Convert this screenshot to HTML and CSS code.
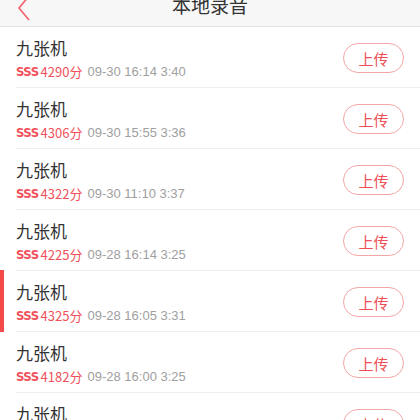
FILE: index.html
```html
<!DOCTYPE html>
<html>
<head>
  <title>本地录音</title>
  <link rel="stylesheet" href="styles.css">
</head>
<body>
  <div class="header">
    <svg class="back" width="14" height="22" viewBox="0 0 14 22">
      <polyline points="12,-4 2,8 12,20" fill="none" stroke="#f0606a" stroke-width="1.6"/>
    </svg>
    <div class="title">本地录音</div>
  </div>

  <ul class="list">
    <li class="item">
      <div class="info">
        <div class="name">九张机</div>
        <div class="meta"><span class="grade">SSS</span><span class="score">4290分</span><span class="date">09-30 16:14 3:40</span></div>
      </div>
      <button class="upload">上传</button>
    </li>
    <li class="item">
      <div class="info">
        <div class="name">九张机</div>
        <div class="meta"><span class="grade">SSS</span><span class="score">4306分</span><span class="date">09-30 15:55 3:36</span></div>
      </div>
      <button class="upload">上传</button>
    </li>
    <li class="item">
      <div class="info">
        <div class="name">九张机</div>
        <div class="meta"><span class="grade">SSS</span><span class="score">4322分</span><span class="date">09-30 11:10 3:37</span></div>
      </div>
      <button class="upload">上传</button>
    </li>
    <li class="item">
      <div class="info">
        <div class="name">九张机</div>
        <div class="meta"><span class="grade">SSS</span><span class="score">4225分</span><span class="date">09-28 16:14 3:25</span></div>
      </div>
      <button class="upload">上传</button>
    </li>
    <li class="item active">
      <div class="info">
        <div class="name">九张机</div>
        <div class="meta"><span class="grade">SSS</span><span class="score">4325分</span><span class="date">09-28 16:05 3:31</span></div>
      </div>
      <button class="upload">上传</button>
    </li>
    <li class="item">
      <div class="info">
        <div class="name">九张机</div>
        <div class="meta"><span class="grade">SSS</span><span class="score">4182分</span><span class="date">09-28 16:00 3:25</span></div>
      </div>
      <button class="upload">上传</button>
    </li>
    <li class="item">
      <div class="info">
        <div class="name">九张机</div>
        <div class="meta"><span class="grade">SSS</span><span class="score">4190分</span><span class="date">09-28 15:52 3:28</span></div>
      </div>
      <button class="upload">上传</button>
    </li>
  </ul>
</body>
</html>
```

FILE: styles.css
```css
body {
  margin: 0;
  font-family: "Noto Sans CJK SC", "Liberation Sans", sans-serif;
  background: #fff;
  overflow: hidden;
}

.header {
  position: relative;
  height: 26px;
  background: #f7f7f7;
  border-bottom: 1px solid #e2e2e2;
  display: flex;
  justify-content: center;
}

.back {
  position: absolute;
  left: 17px;
  top: 0;
}

.title {
  font-size: 19px;
  line-height: 20px;
  margin-top: -5px;
  color: #333;
}

.list {
  list-style: none;
  margin: 0;
  padding: 0;
}

.item {
  position: relative;
  height: 60px;
  margin-left: 16px;
  padding-right: 16px;
  border-bottom: 1px solid #efefef;
  display: flex;
  align-items: center;
  justify-content: space-between;
}

.item.active::before {
  content: "";
  position: absolute;
  left: -16px;
  top: -1px;
  bottom: -1px;
  width: 4px;
  background: #f44a4a;
}

.info {
  display: flex;
  flex-direction: column;
  gap: 3px;
  margin-top: 2px;
}

.name {
  font-size: 17px;
  line-height: 24px;
  color: #333;
}

.meta {
  font-size: 13px;
  line-height: 18px;
  display: flex;
  align-items: center;
}

.grade {
  font-family: "Liberation Sans Narrow", "DejaVu Sans Condensed", sans-serif;
  font-weight: bold;
  color: #f0505a;
  font-size: 13px;
  letter-spacing: -0.5px;
  margin-right: 2px;
}

.score {
  color: #f0505a;
  margin-right: 5px;
}

.date {
  font-family: "Liberation Sans", sans-serif;
  color: #a0a0a0;
}

.upload {
  width: 61px;
  height: 30px;
  border: 1px solid #f2a6a6;
  border-radius: 15px;
  background: #fff;
  color: #ee4f55;
  font-family: "Noto Sans CJK SC", sans-serif;
  font-size: 15px;
  padding: 0;
  margin-top: 2px;
}
```
